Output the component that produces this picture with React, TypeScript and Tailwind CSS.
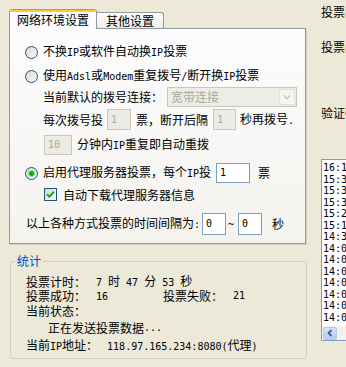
import React from "react";

// half-width latin in the old 宋体 look: 6px per glyph
const M = ({ children }: { children: React.ReactNode }) => (
  <span className="whitespace-pre font-['DejaVu_Sans_Mono',monospace] text-[10px]">{children}</span>
);

const Radio = ({ checked = false }: { checked?: boolean }) => (
  <span className="flex h-[13px] w-[13px] shrink-0 items-center justify-center rounded-full border border-[#1C5180] bg-gradient-to-br from-[#D6D4CB] to-white">
    {checked && (
      <span className="h-[5px] w-[5px] rounded-full bg-[#1FA31F] shadow-[0_0_1px_1px_#8CE08A]" />
    )}
  </span>
);

const Check = () => (
  <span className="flex h-[13px] w-[13px] shrink-0 items-center justify-center border border-[#1C5180] bg-gradient-to-br from-[#D6D4CB] to-white">
    <svg width="9" height="9" viewBox="0 0 9 9">
      <path d="M1 4.2 L3.4 6.6 L8 1.8" fill="none" stroke="#21A121" strokeWidth="2" />
    </svg>
  </span>
);

const Field = ({
  value,
  className,
  disabled = false,
}: {
  value: string;
  className: string;
  disabled?: boolean;
}) => (
  <span
    className={`flex shrink-0 items-center border pl-[3px] ${
      disabled
        ? "border-[#C9C7BA] bg-[#ECEBE4] text-[#ACA899]"
        : "border-[#7F9DB9] bg-white text-black"
    } ${className}`}
  >
    <M>{value}</M>
  </span>
);

const logRows = [
  "16:12:41",
  "15:38:20",
  "15:34:02",
  "15:31:55",
  "15:26:17",
  "15:12:09",
  "14:37:44",
  "14:09:31",
  "14:08:12",
  "14:07:50",
  "14:06:33",
  "14:05:21",
  "14:04:08",
  "14:03:47",
];

export default function App() {
  return (
    <div className="flex h-[367px] w-[346px] overflow-hidden bg-[#ECE9D8] font-['Noto_Sans_CJK_SC',sans-serif] text-[12px] leading-[14px] text-black">
      <div className="w-[321px] shrink-0 pl-[9px] pt-[9px]">
        {/* tabs */}
        <div className="flex h-[19px] items-end">
          <div className="relative z-10 -mb-px flex h-[20px] w-[88px] flex-col overflow-hidden rounded-t-[3px] border-x border-[#919B9C] bg-[#FCFCFE]">
            <div className="h-px bg-[#E68B2C]" />
            <div className="h-[2px] bg-[#FFC73C]" />
            <div className="flex flex-1 items-center justify-center pb-[1px]">网络环境设置</div>
          </div>
          <div className="flex h-[16px] w-[67px] items-center justify-center rounded-tr-[3px] border-t border-r border-[#919B9C] bg-gradient-to-b from-white to-[#ECEBE6] pt-[1px]">
            其他设置
          </div>
        </div>

        {/* tab page */}
        <div className="flex h-[216px] w-[297px] flex-col border border-[#919B9C] bg-gradient-to-b from-[#FCFCFE] to-[#F4F3EE] pt-[13px] shadow-[1px_1px_0_#D5D2C4]">
          <div className="flex h-[20px] items-center gap-[5px] pl-[15px]">
            <Radio />
            <span>
              不换<M>IP</M>或软件自动换<M>IP</M>投票
            </span>
          </div>
          <div className="mt-[4px] flex h-[20px] items-center gap-[5px] pl-[15px]">
            <Radio />
            <span>
              使用<M>Adsl</M>或<M>Modem</M>重复拨号<M>/</M>断开换<M>IP</M>投票
            </span>
          </div>
          <div className="mt-[1px] flex h-[20px] items-center pl-[33px]">
            <span>当前默认的拨号连接：</span>
            <div className="ml-[4px] flex h-[20px] w-[130px] items-center border border-[#C9C7BA] bg-[#EDECE5] pl-[3px] pr-[1px] text-[#ACA899]">
              <span className="flex-1">宽带连接</span>
              <span className="flex h-[16px] w-[16px] items-center justify-center rounded-[2px] border border-[#E2E0D6] bg-[#F6F5EF]">
                <svg width="8" height="6" viewBox="0 0 8 6">
                  <path d="M1 1.5 L4 4.5 L7 1.5" fill="none" stroke="#C9C7BA" strokeWidth="1.6" />
                </svg>
              </span>
            </div>
          </div>
          <div className="mt-[2px] flex h-[21px] items-center pl-[33px]">
            <span>每次拨号投</span>
            <Field value="1" disabled className="ml-[4px] h-[21px] w-[24px]" />
            <span className="ml-[5px]">票，断开后隔</span>
            <Field value="1" disabled className="ml-[5px] h-[21px] w-[23px]" />
            <span className="ml-[4px]">
              秒再拨号<M>.</M>
            </span>
          </div>
          <div className="mt-[5px] flex h-[20px] items-center pl-[34px]">
            <Field value="10" disabled className="h-[20px] w-[28px]" />
            <span className="ml-[5px]">
              分钟内<M>IP</M>重复即自动重拨
            </span>
          </div>
          <div className="mt-[8px] flex h-[20px] items-center gap-[5px] pl-[15px]">
            <Radio checked />
            <span>
              启用代理服务器投票，每个<M>IP</M>投
            </span>
            <Field value="1" className="h-[20px] w-[34px]" />
            <span className="ml-[3px]">票</span>
          </div>
          <div className="mt-[5px] flex h-[13px] items-center gap-[6px] pl-[34px]">
            <Check />
            <span>自动下载代理服务器信息</span>
          </div>
          <div className="mt-[12px] flex h-[22px] items-center pl-[16px]">
            <span>
              以上各种方式投票的时间间隔为<M>:</M>
            </span>
            <Field value="0" className="ml-[2px] h-[22px] w-[24px]" />
            <span className="ml-[2px]">
              <M>~</M>
            </span>
            <Field value="0" className="ml-[4px] h-[22px] w-[24px]" />
            <span className="ml-[10px]">秒</span>
          </div>
        </div>

        {/* statistics group */}
        <fieldset className="ml-[1px] mt-[10px] h-[105px] w-[297px] rounded-[3px] border border-[#D0D0BF] pl-[15px] leading-[12px]">
          <legend className="-ml-[11px] px-[2px] leading-[14px] text-[#0046D5]">统计</legend>
          <div className="mt-[7px] flex h-[14px] items-center">
            <span className="w-[70px]">投票计时：</span>
            <span>
              <M>7 </M>时<M> 47 </M>分<M> 53 </M>秒
            </span>
          </div>
          <div className="flex h-[14px] items-center">
            <span className="w-[70px]">投票成功：</span>
            <span className="w-[67px]">
              <M>16</M>
            </span>
            <span className="w-[70px]">投票失败：</span>
            <M>21</M>
          </div>
          <div className="mt-[1px] flex h-[14px] items-center">当前状态：</div>
          <div className="mt-[3px] flex h-[14px] items-center pl-[22px]">
            正在发送投票数据<M>...</M>
          </div>
          <div className="mt-[4px] flex h-[14px] items-center">
            <span>
              当前<M>IP</M>地址：
            </span>
            <span className="ml-[9px]">
              <M>118.97.165.234:8080(</M>代理<M>)</M>
            </span>
          </div>
        </fieldset>
      </div>

      {/* right column, cut off by the window */}
      <div className="flex min-w-[120px] flex-col whitespace-nowrap">
        <div className="mt-[5px] h-[14px]">投票网址：</div>
        <div className="mt-[21px] h-[14px]">投票间隔：</div>
        <div className="mt-[52px] h-[14px]">验证码：</div>
        <div className="mt-[39px] flex h-[182px] w-[120px] flex-col border border-[#7F9DB9] bg-white">
          <div className="flex-1 overflow-hidden pl-[1px] pt-[2px]">
            {logRows.map((row, i) => (
              <div key={i} className="flex h-[11.5px] items-center overflow-hidden leading-[11px]">
                <M>{row}</M>
              </div>
            ))}
          </div>
          <div className="flex h-[14px] items-center bg-[#F3F1EC] pl-[1px]">
            <span className="flex h-[13px] w-[14px] items-center justify-center rounded-[2px] border border-[#B4C8F6] bg-gradient-to-b from-[#D5E1FD] to-[#B7CBF7]">
              <svg width="6" height="8" viewBox="0 0 6 8">
                <path d="M4.5 1 L1.5 4 L4.5 7" fill="none" stroke="#4D6185" strokeWidth="1.8" />
              </svg>
            </span>
          </div>
        </div>
      </div>
    </div>
  );
}
